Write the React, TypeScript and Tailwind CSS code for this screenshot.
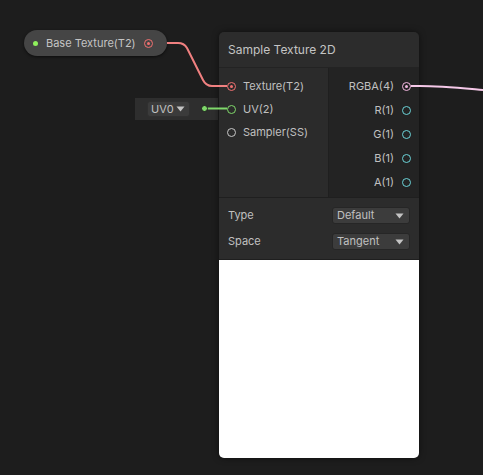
import React from "react";

const font = { fontFamily: "Inter, 'Noto Sans', sans-serif" };

function InPort({ color, fill }: { color: string; fill?: string }) {
  return (
    <span
      className="w-[9px] h-[9px] rounded-full border-[1.5px] flex items-center justify-center shrink-0"
      style={{ borderColor: color }}
    >
      {fill && <span className="w-[3px] h-[3px] rounded-full" style={{ background: fill }} />}
    </span>
  );
}

function Caret() {
  return (
    <svg width="9" height="6" viewBox="0 0 9 6">
      <path d="M0.5 0.5 L8.5 0.5 L4.5 5.5 Z" fill="#c4c4c4" />
    </svg>
  );
}

export default function App() {
  const outputs = [
    { label: "RGBA(4)", color: "#f2b6e0", fill: "#f2b6e0" },
    { label: "R(1)", color: "#6bd3d8" },
    { label: "G(1)", color: "#6bd3d8" },
    { label: "B(1)", color: "#6bd3d8" },
    { label: "A(1)", color: "#6bd3d8" },
  ];
  return (
    <div className="relative w-[483px] h-[475px] bg-[#1d1d1d] overflow-hidden text-[#c0c0c0]" style={font}>
      {/* Base texture property node */}
      <div className="absolute left-[24px] top-[30px] w-[143px] h-[26px] rounded-full bg-[#454545] flex items-center pl-[9px] pr-[14px] text-[11px] whitespace-nowrap shadow-[0_1px_3px_rgba(0,0,0,0.6)]">
        <span className="w-[5px] h-[5px] rounded-full bg-[#8ff05c] shrink-0" />
        <span className="ml-[8px] flex-1 text-[#c4c4c4]">Base Texture(T2)</span>
        <InPort color="#f07070" fill="#f07070" />
      </div>

      {/* UV0 node */}
      <div className="absolute left-[135px] top-[98px] w-[83px] h-[22px] bg-[#2e2e2e] flex items-center pl-[12px]">
        <div className="w-[43px] h-[16px] rounded-[3px] bg-[#3b3b3b] flex items-center justify-between pl-[3px] pr-[4px] text-[11px] border border-[#303030]">
          <span>UV0</span>
          <Caret />
        </div>
      </div>

      {/* Sample Texture 2D node */}
      <div className="absolute left-[219px] top-[32px] w-[200px] rounded-[5px] flex flex-col shadow-[0_0_6px_rgba(0,0,0,0.5)]">
        <div className="h-[36px] bg-[#2c2c2c] rounded-t-[5px] flex items-center pl-[9px] text-[12px] text-[#c4c4c4] border-b border-[#232323]">
          Sample Texture 2D
        </div>
        <div className="flex h-[129px]">
          <div className="w-[110px] bg-[#2b2b2b] flex flex-col pt-[7px] pl-[8px] border-r border-[#1f1f1f]">
            {[
              { label: "Texture(T2)", color: "#f07070", fill: "#f07070" },
              { label: "UV(2)", color: "#7fd86a" },
              { label: "Sampler(SS)", color: "#c8c8c8" },
            ].map((p) => (
              <div key={p.label} className="h-[23px] flex items-center gap-[7px] text-[11px]">
                <InPort color={p.color} fill={p.fill} />
                <span>{p.label}</span>
              </div>
            ))}
          </div>
          <div className="flex-1 bg-[#232323] flex flex-col pt-[6px] pr-[8px] items-end">
            {outputs.map((p) => (
              <div key={p.label} className="h-[24px] flex items-center gap-[8px] text-[11px]">
                <span>{p.label}</span>
                <InPort color={p.color} fill={p.fill} />
              </div>
            ))}
          </div>
        </div>
        <div className="bg-[#2c2c2c] border-t border-[#1f1f1f] flex flex-col pt-[9px] pb-[9px] px-[9px] gap-[9px]">
          {[
            { label: "Type", value: "Default" },
            { label: "Space", value: "Tangent" },
          ].map((r) => (
            <div key={r.label} className="flex items-center justify-between h-[17px] text-[11px]">
              <span>{r.label}</span>
              <div className="w-[78px] h-[17px] rounded-[3px] bg-[#3c3c3c] border border-[#262626] flex items-center justify-between pl-[4px] pr-[5px]">
                <span>{r.value}</span>
                <Caret />
              </div>
            </div>
          ))}
        </div>
        <div className="h-[199px] bg-white rounded-b-[5px] border-t border-[#1f1f1f]" />
      </div>

      {/* wires on top */}
      <svg className="absolute inset-0 pointer-events-none" width="483" height="475">
        <path d="M167 43 L178 43 Q184 43 187 48 L203 80 Q206 86 212 86 L227 86" stroke="#f08080" strokeWidth="2" fill="none" />
        <path d="M206 108.5 L227 108.5" stroke="#7fd86a" strokeWidth="2" fill="none" />
        <circle cx="204.5" cy="108.5" r="3" fill="#7fd86a" stroke="#1d1d1d" strokeWidth="1" />
        <path d="M411 86 L420 86 C440 86 460 88 483 90" stroke="#f5c8e8" strokeWidth="2" fill="none" />
      </svg>
    </div>
  );
}
